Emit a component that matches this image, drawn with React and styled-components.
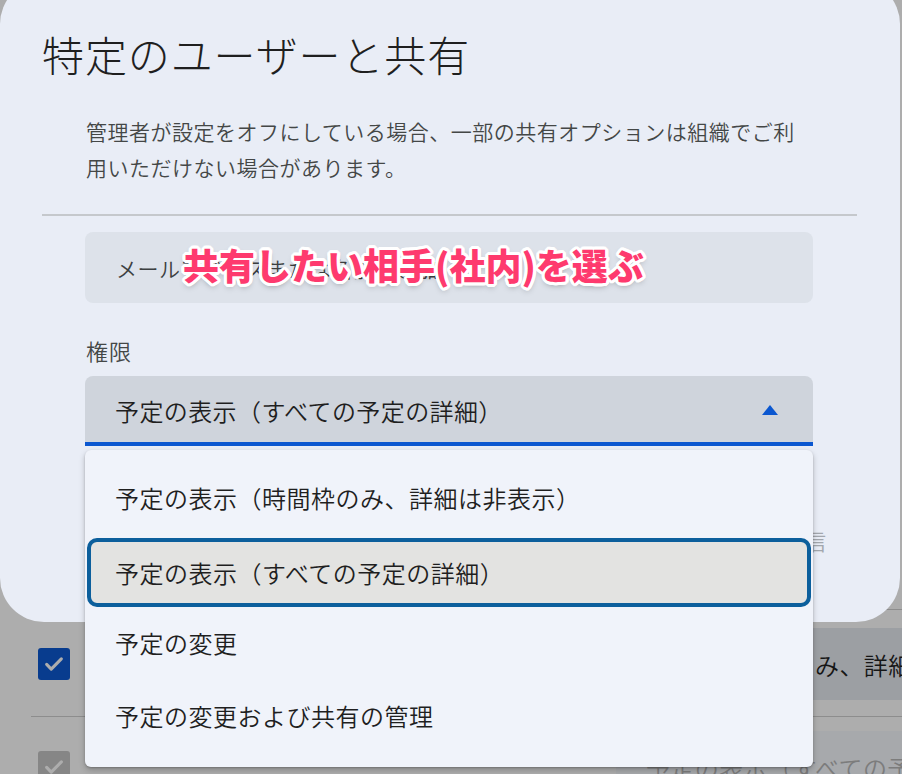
import React from 'react';
import styled, { createGlobalStyle } from 'styled-components';

const Global = createGlobalStyle`
  html, body { margin: 0; padding: 0; }
  body { font-family: "Noto Sans CJK JP", "Noto Sans", sans-serif; font-weight: 350; }
  * { box-sizing: border-box; }
`;

const Page = styled.div`
  position: relative;
  width: 902px;
  height: 774px;
  overflow: hidden;
  background: #adadad;
`;

/* ---------- page behind the scrim ---------- */
const Backdrop = styled.div`
  display: flex;
  flex-direction: column;
  padding: 609px 0 0 31px;
`;

const BgRule = styled.div`
  height: 1px;
  background: #8d8d8d;
  margin-top: ${p => p.$top}px;
`;

const BgRow = styled.div`
  display: flex;
  align-items: center;
  height: 72px;
  margin-top: ${p => p.$top}px;
`;

const BgCheck = styled.div`
  flex: none;
  width: 32px;
  height: 32px;
  margin-left: 7px;
  border-radius: 3px;
  background: ${p => (p.$on ? '#083c8e' : '#868686')};
  display: flex;
  align-items: center;
  justify-content: center;
`;

const BgSpacer = styled.div`
  flex: none;
  width: ${p => p.$w}px;
`;

const BgSelect = styled.div`
  flex: none;
  width: 600px;
  height: 72px;
  background: ${p => p.$bg};
  padding-left: 30px;
  display: flex;
  align-items: center;
  font-size: 24px;
  letter-spacing: 0.4px;
  white-space: nowrap;
  color: ${p => p.$c};
`;

/* ---------- dialog ---------- */
const Dialog = styled.section`
  position: absolute;
  left: 0;
  top: -20px;
  width: 900px;
  height: 642px;
  background: #e9edf6;
  border-radius: 44px;
  padding: 48px 0 0 42px;
  display: flex;
  flex-direction: column;
`;

const Title = styled.h2`
  margin: 0;
  font-size: 42px;
  line-height: 52px;
  font-weight: 300;
  letter-spacing: 0.9px;
  color: #1f1f1f;
`;

const Desc = styled.p`
  margin: 33px 0 0 44px;
  width: 722px;
  font-size: 21px;
  letter-spacing: 0.5px;
  line-height: 36px;
  color: #444746;
`;

const Rule = styled.hr`
  margin: 29px 0 0;
  width: 815px;
  border: 0;
  height: 2px;
  background: #c5c8cc;
`;

const Form = styled.div`
  margin: 16px 0 0 43px;
  width: 728px;
  display: flex;
  flex-direction: column;
`;

const EmailField = styled.div`
  height: 71px;
  border-radius: 8px;
  background: #dde2ea;
  padding-left: 31px;
  display: flex;
  align-items: center;
  font-size: 21px;
  letter-spacing: 0.5px;
  color: #3c3f41;
`;

const FieldLabel = styled.div`
  margin-top: 32px;
  padding-left: 1px;
  font-size: 22px;
  line-height: 30px;
  letter-spacing: 1px;
  color: #444746;
`;

const Select = styled.div`
  margin-top: 11px;
  height: 70px;
  background: #cfd4dc;
  border-radius: 8px 8px 0 0;
  border-bottom: 4px solid #0b57d0;
  padding: 2px 35px 0 30px;
  display: flex;
  align-items: center;
  justify-content: space-between;
  font-size: 24px;
  letter-spacing: 0.4px;
  color: #1f1f1f;
`;

const Footer = styled.div`
  margin-top: 79px;
  padding-right: 74px;
  display: flex;
  justify-content: flex-end;
  font-size: 22px;
  line-height: 30px;
  color: #a3a7ad;
`;

/* ---------- dropdown menu ---------- */
const Menu = styled.ul`
  position: absolute;
  left: 85px;
  top: 450px;
  width: 728px;
  margin: 0;
  padding: 11px 0 15px;
  list-style: none;
  background: #f0f3fa;
  border-radius: 6px;
  box-shadow: 0 3px 6px rgba(0, 0, 0, 0.22), 0 1px 2px rgba(0, 0, 0, 0.2);
`;

const Item = styled.li`
  height: 72.5px;
  display: flex;
  align-items: center;
  padding-left: 30px;
  font-size: 24px;
  letter-spacing: 0.5px;
  color: #1f1f1f;
  ${p =>
    p.$selected &&
    `
    height: 69px;
    margin: 4px 2px 0;
    padding-left: 24px;
    border: 4px solid #0c5f9c;
    border-radius: 10px;
    background: #e3e3e1;
  `}
`;

/* ---------- annotation ---------- */
const Annotation = styled.div`
  position: absolute;
  left: 183px;
  top: 244px;
  font-size: 36px;
  line-height: 40px;
  font-weight: 900;
  color: #fe3a6e;
  white-space: nowrap;
  text-shadow:
    3px 0 #fff, -3px 0 #fff, 0 3px #fff, 0 -3px #fff,
    2px 2px #fff, -2px -2px #fff, 2px -2px #fff, -2px 2px #fff,
    3px 1px #fff, -3px 1px #fff, 3px -1px #fff, -3px -1px #fff,
    1px 3px #fff, -1px 3px #fff, 1px -3px #fff, -1px -3px #fff,
    0 3px 6px rgba(0, 0, 0, 0.35);
`;

const Check = ({ color }) => (
  <svg width="22" height="22" viewBox="0 0 24 24">
    <path d="M4 12.5l5 5L20 6.5" fill="none" stroke={color} strokeWidth="3.4" strokeLinecap="round" strokeLinejoin="round" />
  </svg>
);

const Caret = () => (
  <svg width="16" height="10" viewBox="0 0 16 10">
    <polygon points="8,0 16,10 0,10" fill="#0b57d0" />
  </svg>
);

const options = [
  '予定の表示（時間枠のみ、詳細は非表示）',
  '予定の表示（すべての予定の詳細）',
  '予定の変更',
  '予定の変更および共有の管理',
];

export default function App() {
  return (
    <>
      <Global />
      <Page>
        <Backdrop>
          <BgRule $top={0} />
          <BgRow $top={18}>
            <BgCheck $on>
              <Check color="#adadad" />
            </BgCheck>
            <BgSpacer $w={471} />
            <BgSelect $bg="#9c9fa3" $c="#161616">予定の表示（時間枠のみ、詳細は非表示）</BgSelect>
          </BgRow>
          <BgRule $top={16} />
          <BgRow $top={14}>
            <BgCheck>
              <Check color="#adadad" />
            </BgCheck>
            <BgSpacer $w={546} />
            <BgSelect $bg="#a7a9ac" $c="#7c7c7c">予定の表示（すべての予定の詳細）</BgSelect>
          </BgRow>
        </Backdrop>

        <Dialog>
          <Title>特定のユーザーと共有</Title>
          <Desc>管理者が設定をオフにしている場合、一部の共有オプションは組織でご利用いただけない場合があります。</Desc>
          <Rule />
          <Form>
            <EmailField>メールアドレスまたは名前を追加</EmailField>
            <FieldLabel>権限</FieldLabel>
            <Select>
              <span>予定の表示（すべての予定の詳細）</span>
              <Caret />
            </Select>
          </Form>
          <Footer>送信</Footer>
        </Dialog>

        <Menu role="listbox">
          {options.map((o, i) => (
            <Item key={o} $selected={i === 1} role="option" aria-selected={i === 1}>
              {o}
            </Item>
          ))}
        </Menu>

        <Annotation>共有したい相手(社内)を選ぶ</Annotation>
      </Page>
    </>
  );
}
